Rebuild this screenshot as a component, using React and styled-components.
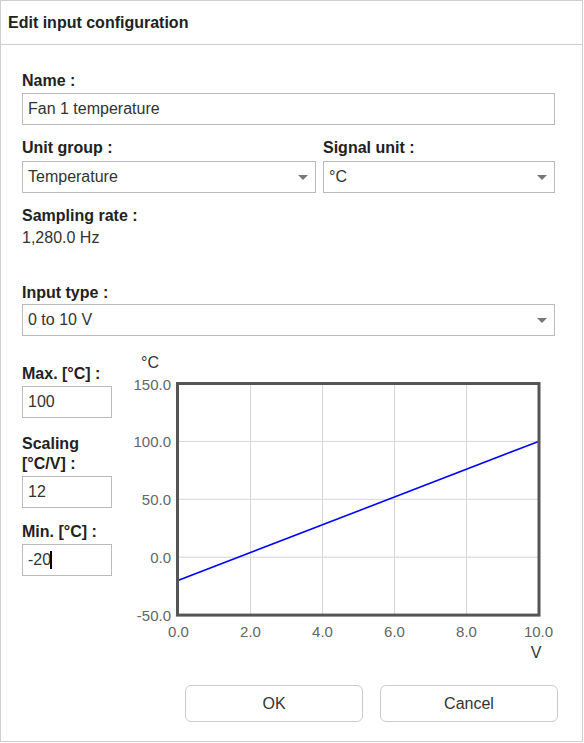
import React from "react";
import styled, { createGlobalStyle } from "styled-components";

const GlobalStyle = createGlobalStyle`
  body {
    margin: 0;
    background: #fff;
    font-family: "Liberation Sans", Arial, sans-serif;
    color: #333;
  }
`;

const Dialog = styled.div`
  width: 583px;
  height: 742px;
  box-sizing: border-box;
  border: 1px solid #cfcfcf;
  display: flex;
  flex-direction: column;
  background: #fff;
`;

const Header = styled.div`
  height: 43px;
  flex-shrink: 0;
  border-bottom: 1px solid #cfcfcf;
  display: flex;
  align-items: center;
  padding-left: 7px;
  font-size: 16px;
  font-weight: bold;
  color: #222;
`;

const Body = styled.div`
  padding: 27px 27px 0 21px;
  display: flex;
  flex-direction: column;
  flex-shrink: 0;
`;

const Field = styled.div`
  display: flex;
  flex-direction: column;
  flex: ${(props) => props.grow || "none"};
  width: ${(props) => props.width || "auto"};
  margin-bottom: ${(props) => (props.gap === undefined ? 14 : props.gap)}px;
`;

const Label = styled.div`
  font-size: 16px;
  font-weight: bold;
  line-height: 18px;
  color: #222;
  margin-bottom: ${(props) => (props.space === undefined ? 4 : props.space)}px;
`;

const Value = styled.div`
  font-size: 16px;
  line-height: 18px;
  color: #333;
`;

const TextInput = styled.input`
  box-sizing: border-box;
  width: 100%;
  height: 32px;
  flex-shrink: 0;
  border: 1px solid #bbb;
  padding: 0 5px;
  margin: 0;
  font-family: "Liberation Sans", Arial, sans-serif;
  font-size: 16px;
  color: #333;
  background: #fff;
  outline: none;
`;

const Row = styled.div`
  display: flex;
  gap: 7px;
`;

const SelectBox = styled.div`
  box-sizing: border-box;
  height: 32px;
  flex-shrink: 0;
  border: 1px solid #bbb;
  padding: 0 5px;
  display: flex;
  align-items: center;
  font-size: 16px;
  color: #333;
  background: #fff;
`;

const Arrow = styled.span`
  margin-left: auto;
  margin-right: 2px;
  width: 0;
  height: 0;
  border-left: 5px solid transparent;
  border-right: 5px solid transparent;
  border-top: 5px solid #777;
`;

const ScaleRow = styled.div`
  display: flex;
  margin-top: 13px;
`;

const SideColumn = styled.div`
  width: 90px;
  flex-shrink: 0;
  padding-top: 15px;
  display: flex;
  flex-direction: column;
`;

const SideLabel = styled(Label)`
  line-height: 20px;
  margin-bottom: 2px;
`;

const SideField = styled.div`
  display: flex;
  flex-direction: column;
  margin-bottom: ${(props) => (props.gap === undefined ? 15 : props.gap)}px;
`;

const CaretWrap = styled.div`
  position: relative;
`;

const Caret = styled.span`
  position: absolute;
  left: 28px;
  top: 7px;
  width: 2px;
  height: 18px;
  background: #000;
`;

const ChartSvg = styled.svg`
  display: block;
  flex-shrink: 0;
  margin-left: 8px;
  font-family: "Liberation Sans", Arial, sans-serif;
`;

const Footer = styled.div`
  margin-top: auto;
  display: flex;
  justify-content: flex-end;
  gap: 17px;
  padding: 0 24px 19px 0;
`;

const Button = styled.button`
  width: 178px;
  height: 37px;
  border: 1px solid #ccc;
  border-radius: 6px;
  background: #fff;
  font-family: "Liberation Sans", Arial, sans-serif;
  font-size: 16px;
  color: #333;
  cursor: pointer;
`;

function Chart() {
  // svg origin sits at page x 120, y 350
  const x0 = 58.5;
  const xStep = 36;
  const yTop = 34.5;
  const yStep = 57.9 / 50;
  const xs = (v) => x0 + v * xStep;
  const ys = (v) => yTop + (150 - v) * yStep;
  const yTicks = [150, 100, 50, 0, -50];
  const xTicks = [0, 2, 4, 6, 8, 10];
  return (
    <ChartSvg width="433" height="315" viewBox="0 0 433 315">
      {xTicks.slice(1, -1).map((t) => (
        <line key={t} x1={xs(t)} x2={xs(t)} y1={yTop} y2={ys(-50)} stroke="#d6d6d6" strokeWidth="1" />
      ))}
      {yTicks.slice(1, -1).map((t) => (
        <line key={t} x1={x0} x2={xs(10)} y1={ys(t)} y2={ys(t)} stroke="#d6d6d6" strokeWidth="1" />
      ))}
      <line x1={xs(0)} y1={ys(-20)} x2={xs(10)} y2={ys(100)} stroke="#0000ff" strokeWidth="1.6" />
      <rect x={x0 - 1} y={yTop} width={xs(10) - x0 + 1.5} height={ys(-50) - yTop} fill="none" stroke="#555" strokeWidth="3" />
      {yTicks.map((t) => (
        <text key={t} x="51" y={ys(t) + 6} textAnchor="end" fontSize="15" fill="#666">
          {t.toFixed(1)}
        </text>
      ))}
      {xTicks.map((t) => (
        <text key={t} x={xs(t)} y="288" textAnchor="middle" fontSize="15" fill="#666">
          {t.toFixed(1)}
        </text>
      ))}
      <text x="30" y="19" textAnchor="middle" fontSize="16" fill="#333">°C</text>
      <text x="416" y="309" textAnchor="middle" fontSize="16" fill="#333">V</text>
    </ChartSvg>
  );
}

export default function App() {
  return (
    <>
      <GlobalStyle />
      <Dialog>
        <Header>Edit input configuration</Header>
        <Body>
          <Field>
            <Label space={3}>Name :</Label>
            <TextInput defaultValue="Fan 1 temperature" />
          </Field>
          <Row>
            <Field width="294px">
              <Label>Unit group :</Label>
              <SelectBox>
                Temperature
                <Arrow />
              </SelectBox>
            </Field>
            <Field grow="1">
              <Label>Signal unit :</Label>
              <SelectBox>
                °C
                <Arrow />
              </SelectBox>
            </Field>
          </Row>
          <Field gap={37}>
            <Label>Sampling rate :</Label>
            <Value>1,280.0 Hz</Value>
          </Field>
          <Field gap={0}>
            <Label space={2}>Input type :</Label>
            <SelectBox>
              0 to 10 V
              <Arrow />
            </SelectBox>
          </Field>
          <ScaleRow>
            <SideColumn>
              <SideField gap={16}>
                <SideLabel>Max. [°C] :</SideLabel>
                <TextInput defaultValue="100" />
              </SideField>
              <SideField gap={14}>
                <SideLabel>
                  Scaling
                  <br />
                  [°C/V] :
                </SideLabel>
                <TextInput defaultValue="12" />
              </SideField>
              <SideField gap={0}>
                <SideLabel>Min. [°C] :</SideLabel>
                <CaretWrap>
                  <TextInput defaultValue="-20" />
                  <Caret />
                </CaretWrap>
              </SideField>
            </SideColumn>
            <Chart />
          </ScaleRow>
        </Body>
        <Footer>
          <Button>OK</Button>
          <Button>Cancel</Button>
        </Footer>
      </Dialog>
    </>
  );
}
